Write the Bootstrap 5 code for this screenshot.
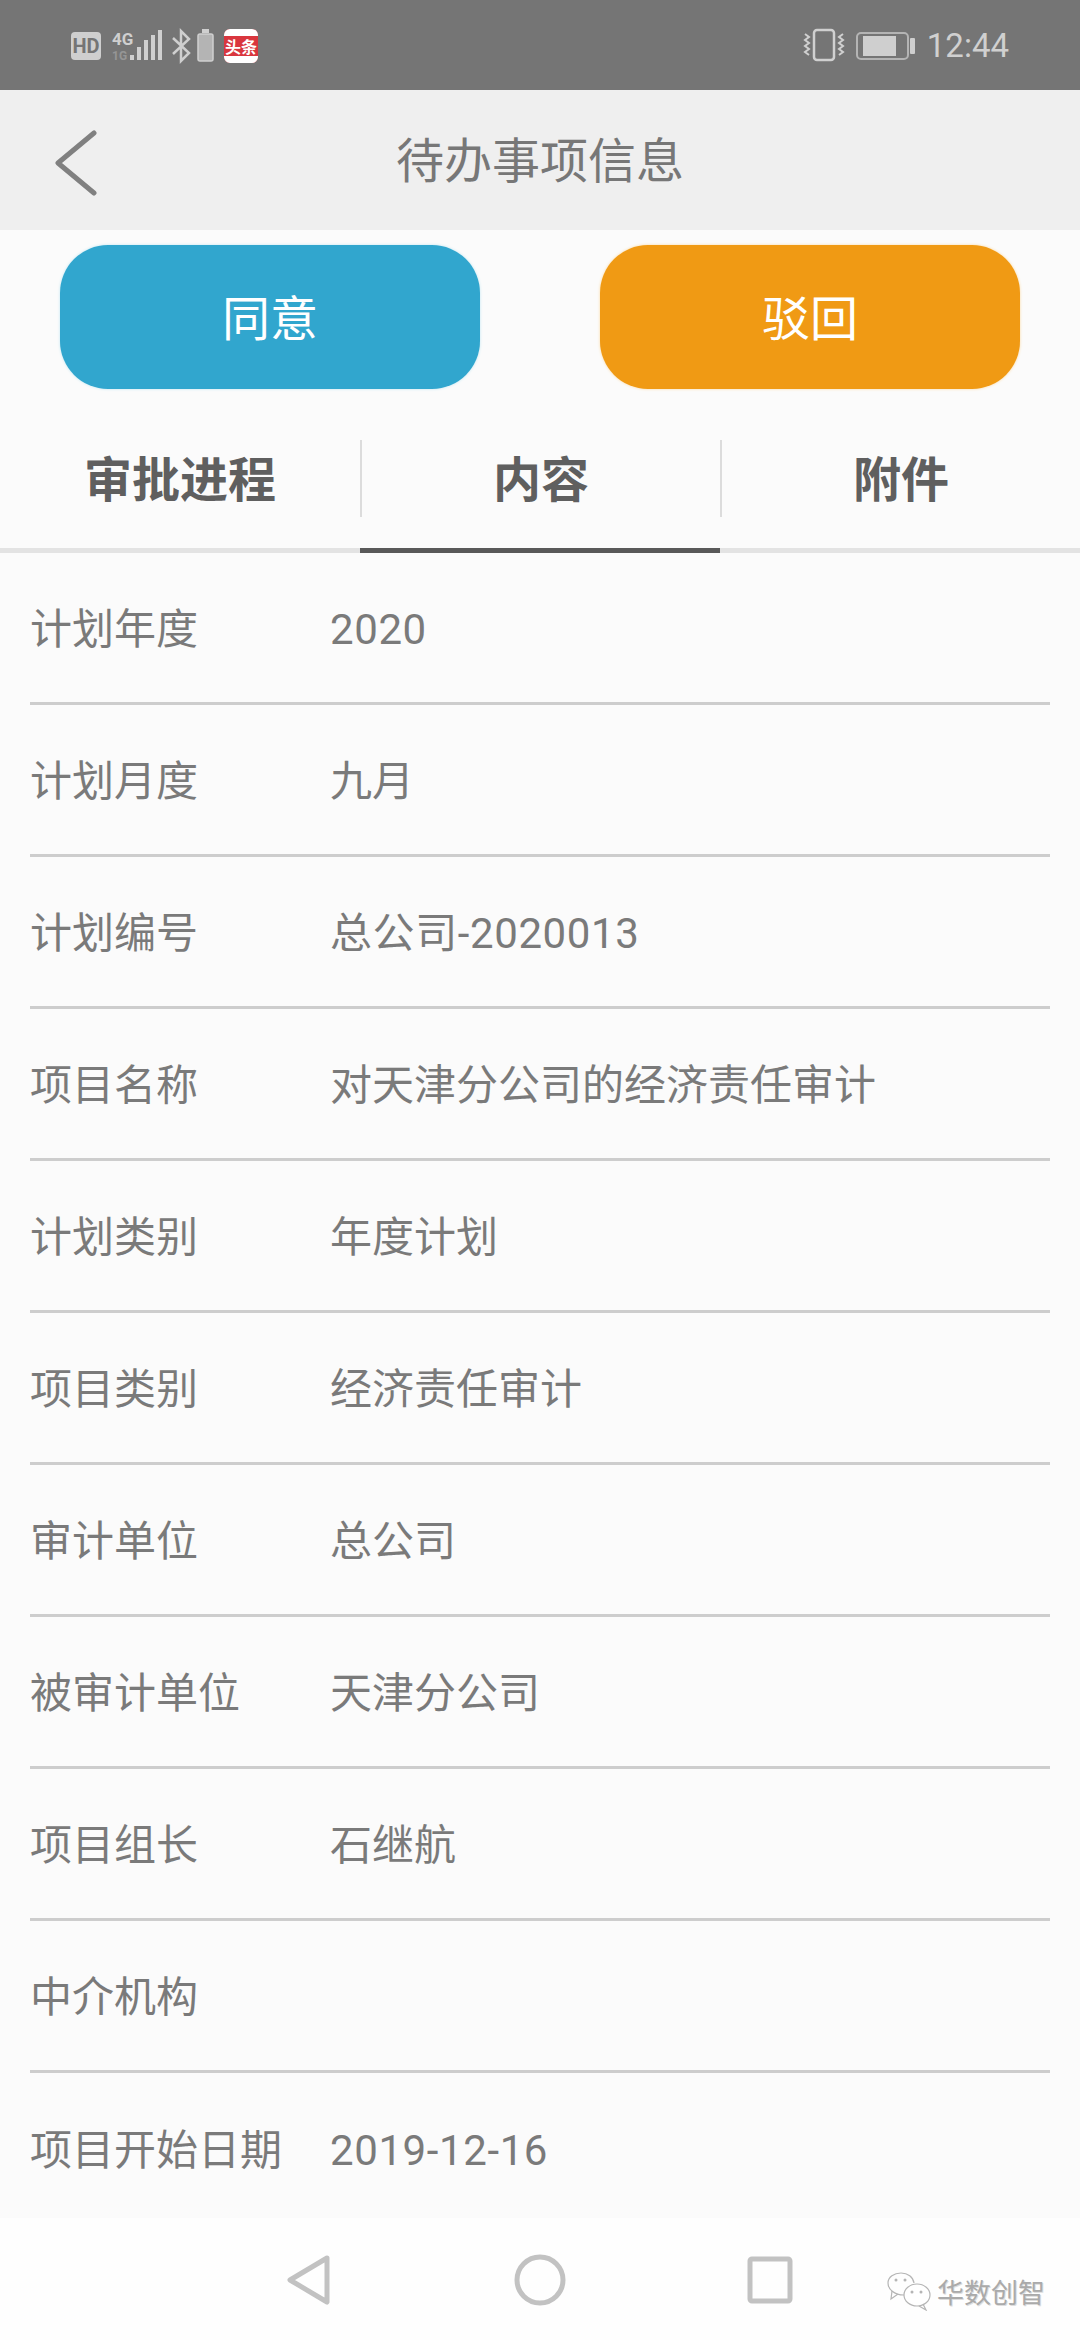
<!DOCTYPE html>
<html lang="zh-CN">
<head>
  <meta charset="UTF-8" />
  <meta name="viewport" content="width=device-width, initial-scale=1.0"/>
  <title>待办事项信息</title>
  <link href="https://cdn.jsdelivr.net/npm/bootstrap@5.3.0/dist/css/bootstrap.min.css" rel="stylesheet">
  <style>
    body { background: #fbfbfb; font-family: Roboto, "Noto Sans CJK SC", sans-serif; color: #777; overflow: hidden; }
    .phone-status { height: 90px; background: #757575; padding: 0 71px; color: #d0d0d0; }
    .status-icons { overflow: visible; }
    .status-time { font-size: 33px; line-height: 1; margin-left: 11px; }
    .page-head { height: 140px; background: #efefef; display: grid; grid-template-columns: 1fr auto 1fr; align-items: center; }
    .page-title { font-size: 48px; font-weight: 400; line-height: 1; color: #777; margin: 0; padding-top: 4px; }
    .head-back { margin-left: 55px; margin-top: 6px; }
    .action-bar { padding: 15px 60px 0; height: 159px; }
    .action-btn { width: 420px; height: 144px; border: 0; border-radius: 48px; color: #fff; font-size: 48px; line-height: 1; padding-top: 11px; }
    .action-ok, .action-ok:hover { background: #31a6ce; color: #fff; box-shadow: 0 0 3px #bfe6f2; }
    .action-back, .action-back:hover { background: #f09a14; color: #fff; box-shadow: 0 0 3px #fbd9a0; }
    .tab-strip { height: 164px; padding-top: 51px; border-bottom: 5px solid #e3e3e3; }
    .tab-cell { width: 360px; height: 77px; padding-top: 4px; font-size: 48px; font-weight: 700; color: #5f5f5f; }
    .tab-cell + .tab-cell { border-left: 2px solid #dcdcdc; }
    .tab-mark { position: absolute; left: 360px; bottom: -5px; width: 360px; height: 5px; background: #595959; }
    .info-row { height: 152px; margin: 0 30px; padding-top: 4px; border-bottom: 3px solid #cdcdcd; font-size: 42px; line-height: 1; color: #7a7a7a; }
    .info-row:last-child { border-bottom: 0; }
    .info-label { width: 300px; flex: none; }
    .info-digits { letter-spacing: .6px; }
    .info-list { height: 1665px; overflow: hidden; }
    .soft-nav { height: 122px; background: #fefefe; padding: 36px 0 0 285px; position: relative; }
    .soft-home { margin-left: 181px; }
    .soft-recent { margin-left: 180px; }
    .mark-icon { position: absolute; left: 886px; top: 53px; }
    .mark-text { position: absolute; left: 937px; top: 63px; font-size: 27px; line-height: 1; color: #aaa; text-shadow: 1px 1px 0 #ddd; }
  </style>
</head>
<body>

<!-- status bar -->
<div class="phone-status d-flex align-items-center justify-content-between">
  <svg class="status-icons" width="200" height="40" viewBox="0 0 200 40">
    <rect x="0" y="7" width="30" height="28" rx="4" fill="#cfcfcf"/>
    <text x="15" y="28" text-anchor="middle" font-size="20" font-weight="700" font-family="Roboto" fill="#757575">HD</text>
    <text x="41" y="20" font-size="17" font-weight="700" font-family="Roboto" fill="#cfcfcf">4G</text>
    <text x="41" y="35" font-size="12" font-weight="700" font-family="Roboto" fill="#969696">1G</text>
    <rect x="59" y="30" width="4" height="5" fill="#cfcfcf"/>
    <rect x="66" y="22" width="4" height="13" fill="#cfcfcf"/>
    <rect x="73" y="15" width="4" height="20" fill="#cfcfcf"/>
    <rect x="80" y="10" width="4" height="25" fill="#cfcfcf"/>
    <rect x="87" y="5" width="4" height="30" fill="#cfcfcf"/>
    <path d="M102 13 L118 28 L110 36 L110 6 L118 14 L102 29" fill="none" stroke="#cfcfcf" stroke-width="2.500"/>
    <rect x="127" y="9" width="15" height="27" rx="2" fill="#b4b4b4" stroke="#cfcfcf" stroke-width="1.500"/>
    <rect x="131" y="4" width="7" height="4" fill="#cfcfcf"/>
    <rect x="153" y="4" width="34" height="34" rx="6" fill="#d9363e"/>
    <path d="M153 10 a6 6 0 0 1 6 -6 h22 a6 6 0 0 1 6 6 v1 h-34 z" fill="#fff"/>
    <path d="M153 31 h34 v1 a6 6 0 0 1 -6 6 h-22 a6 6 0 0 1 -6 -6 z" fill="#fff"/>
    <text x="170" y="28" text-anchor="middle" font-size="16" font-weight="700" font-family="Noto Sans CJK SC" fill="#fff">头条</text>
  </svg>
  <div class="d-flex align-items-center">
    <svg width="113" height="40" viewBox="0 0 113 40">
      <rect x="11" y="5" width="20" height="30" rx="3" fill="none" stroke="#d0d0d0" stroke-width="2.500"/>
      <path d="M2 9 l4 3 l-4 3 l4 3 l-4 3 l4 3 l-4 3 l4 3 M40 9 l-4 3 l4 3 l-4 3 l4 3 l-4 3 l4 3 l-4 3" fill="none" stroke="#d0d0d0" stroke-width="2"/>
      <rect x="54" y="8" width="51" height="26" rx="4" fill="none" stroke="#b4b4b4" stroke-width="2"/>
      <rect x="60" y="11" width="33" height="20" fill="#cfcfcf"/>
      <rect x="107" y="13" width="5" height="16" rx="1" fill="#cfcfcf"/>
    </svg>
    <span class="status-time">12:44</span>
  </div>
</div>

<!-- header -->
<div class="page-head">
  <svg class="head-back" width="42" height="66" viewBox="0 0 42 66">
    <path d="M39 3 L3 33 L39 63" fill="none" stroke="#808080" stroke-width="5" stroke-linecap="round" stroke-linejoin="round"/>
  </svg>
  <h1 class="page-title">待办事项信息</h1>
</div>

<!-- actions -->
<div class="action-bar d-flex justify-content-between">
  <button type="button" class="btn action-btn action-ok">同意</button>
  <button type="button" class="btn action-btn action-back">驳回</button>
</div>

<!-- tabs -->
<div class="tab-strip position-relative d-flex">
  <div class="tab-cell d-flex align-items-center justify-content-center">审批进程</div>
  <div class="tab-cell d-flex align-items-center justify-content-center">内容</div>
  <div class="tab-cell d-flex align-items-center justify-content-center">附件</div>
  <div class="tab-mark"></div>
</div>

<!-- fields -->
<div class="info-list" id="infoList"></div>

<!-- android nav -->
<div class="soft-nav d-flex align-items-start">
  <svg width="48" height="52" viewBox="0 0 48 52">
    <path d="M42 4 L5 26 L42 48 Z" fill="none" stroke="#c2c2c2" stroke-width="5" stroke-linejoin="round"/>
  </svg>
  <svg class="soft-home" width="52" height="52" viewBox="0 0 52 52">
    <circle cx="26" cy="26" r="23" fill="none" stroke="#c2c2c2" stroke-width="5"/>
  </svg>
  <svg class="soft-recent" width="48" height="52" viewBox="0 0 48 52">
    <rect x="4" y="5" width="40" height="42" rx="2" fill="none" stroke="#c2c2c2" stroke-width="5"/>
  </svg>
  <svg class="mark-icon" width="46" height="40" viewBox="0 0 46 40">
    <path d="M18 24 C8 24 2 18 2 12 C2 6 8 2 15 2 C22 2 27 6 28 12" fill="none" stroke="#b5b5b5" stroke-width="1.200"/>
    <path d="M6 20 L5 28 L12 23" fill="none" stroke="#b5b5b5" stroke-width="1.200"/>
    <ellipse cx="31" cy="24" rx="13" ry="11" fill="#fff" stroke="#b5b5b5" stroke-width="1.200"/>
    <path d="M37 33 L40 39 L33 35" fill="none" stroke="#b5b5b5" stroke-width="1.200"/>
    <circle cx="10" cy="9" r="1.500" fill="#b5b5b5"/><circle cx="19" cy="9" r="1.500" fill="#b5b5b5"/>
    <circle cx="26" cy="21" r="1.500" fill="#b5b5b5"/><circle cx="35" cy="21" r="1.500" fill="#b5b5b5"/>
  </svg>
  <span class="mark-text">华数创智</span>
</div>

<script src="https://cdn.jsdelivr.net/npm/bootstrap@5.3.0/dist/js/bootstrap.bundle.min.js"></script>
<script>
  const fields = [
    ["计划年度", "2020"],
    ["计划月度", "九月"],
    ["计划编号", "总公司-2020013"],
    ["项目名称", "对天津分公司的经济责任审计"],
    ["计划类别", "年度计划"],
    ["项目类别", "经济责任审计"],
    ["审计单位", "总公司"],
    ["被审计单位", "天津分公司"],
    ["项目组长", "石继航"],
    ["中介机构", ""],
    ["项目开始日期", "2019-12-16"]
  ];
  const list = document.getElementById("infoList");
  fields.forEach(f => {
    const row = document.createElement("div");
    row.className = "info-row d-flex align-items-center";
    const digits = /\d/.test(f[1]) ? "info-digits" : "";
    row.innerHTML = `<span class="info-label">${f[0]}</span><span class="${digits}">${f[1]}</span>`;
    list.appendChild(row);
  });
</script>

</body>
</html>
